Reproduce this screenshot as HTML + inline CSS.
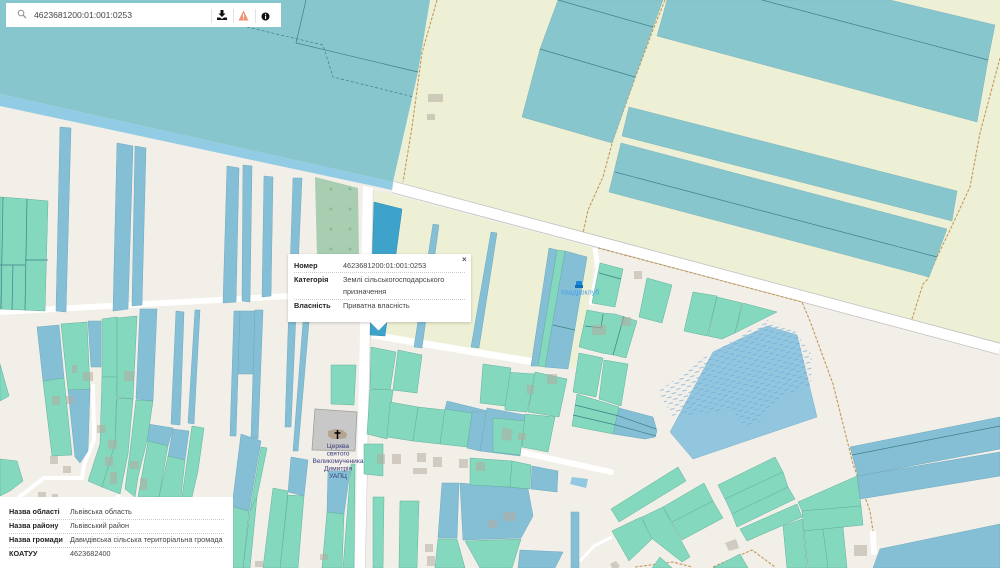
<!DOCTYPE html>
<html lang="uk">
<head>
<meta charset="utf-8">
<title>Кадастр</title>
<style>
html,body{margin:0;padding:0;width:1000px;height:568px;overflow:hidden;background:#f2efe9;font-family:"Liberation Sans",Arial,sans-serif;color:#333}
#map{position:absolute;left:0;top:0;width:1000px;height:568px;display:block;filter:blur(.35px)}
.t polygon{fill:#88c6ce;stroke:#7fb4bb;stroke-width:.5}
.b polygon{fill:#85bfd6;stroke:#6fa9bd;stroke-width:.5}
.g polygon{fill:#84d8bd;stroke:#62b09c;stroke-width:.5}
.l{fill:none;stroke:#3f7f88;stroke-width:.7}
.o{fill:none;stroke:#c39a5b;stroke-width:1.100;stroke-dasharray:3 1.500}
.h polygon,.h rect{fill:#b5aba0;opacity:.55}
.search{position:absolute;left:6px;top:3px;width:275px;height:24px;background:#fff}
.search .v{position:absolute;left:28px;top:0;line-height:24px;font-size:8.600px;color:#444}
.sep{position:absolute;top:6px;width:1px;height:14px;background:#e2e2e2}
.panel{position:absolute;background:#fff;font-size:7.300px;color:#444}
.row{position:absolute;line-height:10px;white-space:nowrap}
.k{position:absolute;left:0;font-weight:bold;color:#222}
.dash{position:absolute;height:0;border-top:1px dotted #ccc}
</style>
</head>
<body>
<svg id="map" viewBox="0 0 1000 568" xmlns="http://www.w3.org/2000/svg">
<defs>
<pattern id="wet" width="11" height="6" patternUnits="userSpaceOnUse" patternTransform="rotate(-14)">
<line x1="1" y1="1.500" x2="5.500" y2="1.500" stroke="#6aa6d6" stroke-width=".8"/>
<line x1="6.500" y1="4.500" x2="11" y2="4.500" stroke="#6aa6d6" stroke-width=".8"/>
</pattern>
</defs>
<rect width="1000" height="568" fill="#f2efe9"/>

<!-- farmland -->
<polygon points="430,0 1000,0 1000,345 393,186" fill="#eef0d5"/>
<polygon points="375,190 595,248 590,300 575,368 530,362 370,335" fill="#eef0d5"/>

<!-- top teal -->
<polygon points="0,94 393,182 392,190 0,106" fill="#92cbe4"/>
<polygon points="0,0 430,0 418,72 393,182 0,94" fill="#88c6ce"/>
<polyline class="l" points="306,0 296,43 418,72"/>
<polyline class="l" points="247,27 323,45 333,77 414,97" style="stroke-dasharray:3 2"/>

<!-- roads -->
<line x1="393" y1="187" x2="1000" y2="349" stroke="#bdbdbd" stroke-width="12"/>
<line x1="393" y1="187" x2="1000" y2="349" stroke="#fff" stroke-width="10.500"/>
<line x1="373" y1="190" x2="365" y2="568" stroke="#c9c9c9" stroke-width="1"/>
<polygon points="363,186 373,188 365,568 355,568" fill="#fff"/>
<line x1="0" y1="312" x2="290" y2="296" stroke="#fff" stroke-width="6"/>
<line x1="372" y1="335" x2="540" y2="363" stroke="#fff" stroke-width="7"/>
<polyline points="595,248 598,270 591,305" fill="none" stroke="#fff" stroke-width="5"/>
<line x1="520" y1="452" x2="611" y2="472" stroke="#fff" stroke-width="6" stroke-linecap="round"/>
<polyline points="93,384 94,440 84,465 82,478 44,478 18,498" fill="none" stroke="#fff" stroke-width="4"/>
<polyline points="120,495 114,500" fill="none" stroke="#fff" stroke-width="4"/>
<polyline points="580,561 594,546 612,537" fill="none" stroke="#fff" stroke-width="3"/>
<line x1="873" y1="533" x2="874" y2="552" stroke="#fff" stroke-width="6" stroke-linecap="round"/>

<!-- dashed tracks -->
<polyline class="o" points="437,0 422,53 412,127 403,182"/>
<polyline class="o" points="665,0 653,30 635,78 613,140 603,177 588,210 583,233"/>
<polyline class="o" points="1000,58 980,133 970,187 950,230 937,257 927,280 923,284 912,319"/>
<polyline class="o" points="598,248 802,302 810,321 833,384 853,464 870,511 873,531"/>
<polyline class="o" points="635,567 673,562 692,567"/>
<polyline class="o" points="713,567 752,550 775,567"/>

<!-- tree area -->
<polygon points="315,177 358,188 359,257 317,257" fill="#a8cdb0"/>
<g fill="#8cbb98">
<circle cx="331" cy="189" r="1.500"/><circle cx="350" cy="189" r="1.500"/>
<circle cx="331" cy="209" r="1.500"/><circle cx="350" cy="209" r="1.500"/>
<circle cx="331" cy="229" r="1.500"/><circle cx="350" cy="229" r="1.500"/>
<circle cx="331" cy="249" r="1.500"/><circle cx="350" cy="249" r="1.500"/>
</g>

<!-- top right teal -->
<g class="t">
<polygon points="558,0 663,0 653,27 635,77 612,143 522,117 540,49"/>
<polygon points="667,0 890,0 995,25 988,60 977,122 657,36"/>
<polygon points="629,107 957,191 952,221 622,136"/>
<polygon points="621,143 947,229 929,277 609,192"/>
</g>
<line class="l" x1="558" y1="0" x2="653" y2="27"/>
<line class="l" x1="540" y1="49" x2="635" y2="77"/>
<line class="l" x1="762" y1="0" x2="988" y2="60"/>
<line class="l" x1="615" y1="172" x2="937" y2="257"/>

<!-- blue strips and parcels -->
<g class="b">
<polygon points="60,127 71,128 66,312 56,311"/>
<polygon points="117,143 133,146 128,309 113,311"/>
<polygon points="135,146 146,148 142,305 132,306"/>
<polygon points="227,166 239,168 236,302 223,303"/>
<polygon points="243,165 252,166 250,302 242,301"/>
<polygon points="264,176 273,177 271,296 262,297"/>
<polygon points="293,178 302,178 291,427 285,427"/>
<polygon points="303,322 309,322 298,451 293,451"/>
<polygon points="433,224 439,225 422,348 414,347"/>
<polygon points="491,232 497,233 479,348 471,347"/>
<polygon points="37,327 59,325 64,378 43,381"/>
<polygon points="68,390 90,389 88,451 80,463 75,457"/>
<polygon points="88,321 101,321 101,367 91,367"/>
<polygon points="140,309 157,309 153,401 136,399"/>
<polygon points="148,424 173,428 168,446 147,441"/>
<polygon points="173,429 189,431 185,460 168,456"/>
<polygon points="176,311 184,312 180,425 171,424"/>
<polygon points="195,310 200,310 194,424 188,423"/>
<polygon points="234,311 240,311 236,436 230,436"/>
<polygon points="240,311 255,311 253,374 238,374"/>
<polygon points="255,310 263,310 258,439 251,437"/>
<polygon points="241,434 261,441 249,511 232,506"/>
<polygon points="291,457 308,460 304,496 288,492"/>
<polygon points="328,471 350,471 344,514 327,512"/>
<polygon points="447,401 500,414 500,419 445,409"/>
<polygon points="472,412 487,412 480,451 467,448"/>
<polygon points="487,408 525,415 520,456 480,451"/>
<polygon points="532,466 558,471 557,492 531,489"/>
<polygon points="442,483 459,483 457,538 438,538"/>
<polygon points="460,483 528,489 533,516 521,538 463,540"/>
<polygon points="520,550 563,552 555,568 518,568"/>
<polygon points="571,512 579,512 579,568 571,568"/>
<polygon points="549,248 557,250 538,366 531,366"/>
<polygon points="565,251 587,257 568,369 545,367"/>
<polygon points="619,408 653,417 657,431 655,437 645,439 613,434"/>
<polygon points="850,447 1000,417 1000,449 858,476"/>
<polygon points="857,476 1000,452 1000,476 860,499"/>
<polygon points="880,549 1000,524 1000,568 873,568"/>
</g>
<polygon points="572,477 588,479 586,488 570,484" fill="#92c8e0"/>

<!-- lake -->
<polygon points="767,326 797,335 817,417 693,459 670,432 713,352" fill="#92c6df" stroke="#7eb1c9" stroke-width=".5"/>
<polygon points="658,392 700,360 767,320 793,328 812,355 811,385 783,397 757,424 743,428 733,410 673,417" fill="url(#wet)" opacity=".8"/>

<!-- selected -->
<polygon points="374,202 402,209 385,336 370,335" fill="#3ea3cb" stroke="#2c88ad" stroke-width=".5"/>

<!-- green parcels -->
<g class="g">
<polygon points="0,197 27,199 48,201 45,311 0,309"/>
<polygon points="43,381 64,378 72,455 52,456"/>
<polygon points="61,324 87,322 90,389 68,390"/>
<polygon points="102,319 117,317 117,377 102,377"/>
<polygon points="117,318 137,316 133,399 117,397"/>
<polygon points="102,377 117,377 115,444 102,487 88,481 100,444"/>
<polygon points="117,398 133,399 128,454 120,494 102,487 115,444"/>
<polygon points="136,400 153,401 147,441 138,477 135,497 125,489 130,451"/>
<polygon points="192,426 204,428 198,471 192,497 182,497 187,461"/>
<polygon points="148,441 168,446 159,497 138,497"/>
<polygon points="168,456 185,460 181,497 159,497"/>
<polygon points="0,364 9,396 0,401"/>
<polygon points="0,459 17,461 23,481 10,491 0,496"/>
<polygon points="261,447 267,448 257,497 250,511"/>
<polygon points="233,507 249,511 243,568 233,568"/>
<polygon points="257,497 250,511 243,568 250,568"/>
<polygon points="273,488 288,491 280,568 263,568"/>
<polygon points="288,495 304,496 298,568 280,568"/>
<polygon points="327,512 344,514 342,568 322,568"/>
<polygon points="351,464 355,464 354,568 343,568"/>
<polygon points="331,365 356,365 354,405 331,404"/>
<polygon points="371,347 396,352 390,391 370,388"/>
<polygon points="398,350 422,355 417,393 393,390"/>
<polygon points="370,389 393,390 387,439 367,434"/>
<polygon points="390,402 418,407 413,441 387,437"/>
<polygon points="418,407 445,410 440,444 413,441"/>
<polygon points="445,409 472,413 467,447 440,444"/>
<polygon points="493,418 525,421 520,455 493,452"/>
<polygon points="505,372 535,374 527,412 505,410"/>
<polygon points="483,364 511,368 505,406 480,403"/>
<polygon points="535,372 567,379 559,417 528,412"/>
<polygon points="525,414 555,417 548,452 522,447"/>
<polygon points="470,458 512,461 510,487 470,485"/>
<polygon points="512,461 531,465 530,489 510,487"/>
<polygon points="373,497 384,497 383,568 373,568"/>
<polygon points="400,501 419,501 417,568 399,568"/>
<polygon points="364,444 383,444 383,476 364,474"/>
<polygon points="438,539 457,539 465,568 435,568"/>
<polygon points="465,541 521,539 512,568 480,568"/>
<polygon points="557,250 565,251 545,367 538,366"/>
<polygon points="600,263 623,269 615,307 592,303"/>
<polygon points="647,278 672,285 662,323 639,317"/>
<polygon points="587,310 603,313 615,314 637,321 626,358 614,355 602,353 579,347"/>
<polygon points="579,353 603,358 596,397 573,392"/>
<polygon points="604,360 628,364 621,406 599,399"/>
<polygon points="577,394 619,407 613,434 572,426"/>
<polygon points="693,292 717,296 707,336 684,331"/>
<polygon points="717,297 742,303 735,333 722,339 708,336"/>
<polygon points="743,303 777,312 735,333"/>
<polygon points="798,502 857,476 861,506 802,511"/>
<polygon points="802,511 861,506 863,525 804,531"/>
<polygon points="740,529 797,504 802,517 747,541"/>
<polygon points="783,526 802,519 807,568 787,568"/>
<polygon points="804,531 823,529 828,568 808,568"/>
<polygon points="823,529 843,527 847,568 828,568"/>
<polygon points="718,485 775,457 783,472 725,499"/>
<polygon points="725,499 783,472 788,487 732,514"/>
<polygon points="732,514 788,487 795,499 737,527"/>
<polygon points="611,509 678,467 686,481 619,522"/>
<polygon points="663,507 704,483 713,501 672,522"/>
<polygon points="672,522 713,501 723,518 682,540"/>
<polygon points="642,517 663,507 690,557 682,562 650,537"/>
<polygon points="612,531 641,517 652,539 629,561"/>
<polygon points="652,568 660,557 672,568"/>
<polygon points="713,568 740,554 748,568"/>
</g>

<!-- parcel inner lines -->
<line class="l" x1="3" y1="197" x2="1" y2="309"/>
<line class="l" x1="27" y1="199" x2="25" y2="310"/>
<line class="l" x1="25" y1="260" x2="48" y2="260"/>
<line class="l" x1="0" y1="265" x2="25" y2="265"/>
<line class="l" x1="13" y1="265" x2="12" y2="310"/>
<line class="l" x1="553" y1="325" x2="575" y2="330"/>
<line class="l" x1="599" y1="273" x2="621" y2="279"/>
<line class="l" x1="575" y1="405" x2="619" y2="416"/>
<line class="l" x1="573" y1="415" x2="616" y2="425"/>
<line class="l" x1="619" y1="416" x2="656" y2="429"/>
<line class="l" x1="616" y1="425" x2="656" y2="436"/>
<line class="l" x1="852" y1="455" x2="1000" y2="426"/>
<polyline class="l" points="585,326 601,328 603,314"/>
<line class="l" x1="613" y1="355" x2="624" y2="316"/>

<!-- buildings -->
<g class="h">
<rect x="428" y="94" width="15" height="8"/>
<rect x="427" y="114" width="8" height="6"/>
<rect x="634" y="271" width="8" height="8"/>
<rect x="854" y="545" width="13" height="11"/>
<polygon points="725,543 736,539 739,548 729,551"/>
<polygon points="610,564 616,561 620,566 618,568 612,568"/>
<rect x="377" y="454" width="8" height="10"/>
<rect x="392" y="454" width="9" height="10"/>
<rect x="417" y="453" width="9" height="9"/>
<rect x="433" y="457" width="9" height="10"/>
<rect x="459" y="459" width="9" height="9"/>
<rect x="413" y="468" width="14" height="6"/>
<rect x="476" y="462" width="9" height="9"/>
<rect x="50" y="456" width="8" height="8"/>
<rect x="63" y="466" width="8" height="7"/>
<rect x="97" y="425" width="9" height="8"/>
<rect x="320" y="554" width="8" height="6"/>
<rect x="255" y="561" width="8" height="6"/>
<rect x="72" y="365" width="5" height="8"/>
<rect x="83" y="372" width="10" height="9"/>
<rect x="52" y="396" width="8" height="9"/>
<rect x="66" y="396" width="8" height="8"/>
<rect x="124" y="371" width="10" height="10"/>
<rect x="108" y="440" width="9" height="9"/>
<rect x="105" y="457" width="8" height="9"/>
<rect x="130" y="461" width="9" height="8"/>
<rect x="110" y="472" width="7" height="12"/>
<rect x="140" y="478" width="7" height="12"/>
<rect x="38" y="492" width="8" height="6"/>
<rect x="52" y="494" width="6" height="4"/>
<rect x="503" y="512" width="13" height="9"/>
<rect x="488" y="520" width="9" height="8"/>
<rect x="425" y="544" width="8" height="8"/>
<rect x="427" y="556" width="8" height="10"/>
<rect x="547" y="374" width="10" height="10"/>
<rect x="527" y="385" width="7" height="9"/>
<polygon points="503,427 513,430 511,441 501,439"/>
<rect x="518" y="433" width="8" height="7"/>
<rect x="592" y="325" width="14" height="10"/>
<rect x="621" y="317" width="10" height="9"/>
</g>

<!-- church -->
<polygon points="315,409 357,412 355,451 312,450" fill="#c8c8c8" stroke="#9e9e9e" stroke-width=".8"/>
<polygon points="328,431 335,429 343,430 347,434 346,438 340,439 332,439 328,436" fill="#b5a590"/>
<path d="M337.500 430V439M334.500 433H340.500" stroke="#000" stroke-width="1.500" fill="none"/>
<g font-family="Liberation Sans, sans-serif" font-size="6.600" fill="#3a3a78" text-anchor="middle">
<text x="338" y="448">Церква</text>
<text x="338" y="455.500">святого</text>
<text x="338" y="463">Великомученика</text>
<text x="338" y="470.500">Димитрія</text>
<text x="338" y="478">УАПЦ</text>
</g>

<!-- POI -->
<rect x="576" y="281" width="6" height="6" rx="1" fill="#1e88d8"/>
<rect x="575" y="285" width="8" height="3" fill="#0f6fb8"/>
<text x="561" y="294.500" font-family="Liberation Sans, sans-serif" font-size="7" fill="#4a9fe8">Квадроклуб</text>
</svg>

<!-- search -->
<div class="search">
<svg style="position:absolute;left:11px;top:6px" width="10" height="10" viewBox="0 0 10 10"><circle cx="4" cy="4" r="2.800" fill="none" stroke="#999" stroke-width="1.100"/><line x1="6" y1="6" x2="9" y2="9" stroke="#999" stroke-width="1.300"/></svg>
<div class="v">4623681200:01:001:0253</div>
<div class="sep" style="left:205px"></div>
<div class="sep" style="left:227px"></div>
<div class="sep" style="left:249px"></div>
<svg style="position:absolute;left:211px;top:7px" width="10" height="10" viewBox="0 0 10 10"><path d="M3.500 0H6.500V3.500H8.500L5 7 1.500 3.500H3.500Z M0 7.500H3L5 9 7 7.500H10V10H0Z" fill="#111"/></svg>
<svg style="position:absolute;left:232px;top:7px" width="11" height="11" viewBox="0 0 10 10"><path d="M5 .500L9.500 9.500H.500Z" fill="#ef9272"/><rect x="4.500" y="3.500" width="1" height="3" fill="#fff"/><rect x="4.500" y="7.200" width="1" height="1" fill="#fff"/></svg>
<svg style="position:absolute;left:254.500px;top:8.500px" width="9" height="9" viewBox="0 0 9 9"><circle cx="4.500" cy="4.500" r="4" fill="#111"/><rect x="4" y="1.800" width="1.100" height="1.100" fill="#fff"/><rect x="4" y="3.600" width="1.100" height="3.400" fill="#fff"/></svg>
</div>

<!-- popup -->
<div class="panel" style="left:288px;top:254px;width:183px;height:68px;box-shadow:0 1px 3px rgba(0,0,0,.2)">
<div class="k" style="left:6px;top:7px;line-height:10px">Номер</div>
<div class="row" style="left:55px;top:7px">4623681200:01:001:0253</div>
<div class="dash" style="left:6px;top:18px;width:171px"></div>
<div class="k" style="left:6px;top:21px;line-height:10px">Категорія</div>
<div class="row" style="left:55px;top:21px">Землі сільськогосподарського</div>
<div class="row" style="left:55px;top:33px">призначення</div>
<div class="dash" style="left:6px;top:45px;width:171px"></div>
<div class="k" style="left:6px;top:47px;line-height:10px">Власність</div>
<div class="row" style="left:55px;top:47px">Приватна власність</div>
<div class="row" style="left:174px;top:1px;font-size:8px;font-weight:bold;color:#555">×</div>
</div>
<svg style="position:absolute;left:370px;top:322px" width="17" height="9" viewBox="0 0 17 9"><polygon points="0,0 17,0 8.500,8.500" fill="#fff"/></svg>

<!-- bottom panel -->
<div class="panel" style="left:0;top:497px;width:233px;height:71px">
<div class="k" style="left:9px;top:10px;line-height:10px">Назва області</div>
<div class="row" style="left:70px;top:10px">Львівська область</div>
<div class="dash" style="left:9px;top:22px;width:215px"></div>
<div class="k" style="left:9px;top:24px;line-height:10px">Назва району</div>
<div class="row" style="left:70px;top:24px">Львівський район</div>
<div class="dash" style="left:9px;top:36px;width:215px"></div>
<div class="k" style="left:9px;top:38px;line-height:10px">Назва громади</div>
<div class="row" style="left:70px;top:38px">Давидівська сільська територіальна громада</div>
<div class="dash" style="left:9px;top:50px;width:215px"></div>
<div class="k" style="left:9px;top:52px;line-height:10px">КОАТУУ</div>
<div class="row" style="left:70px;top:52px">4623682400</div>
</div>
</body>
</html>
